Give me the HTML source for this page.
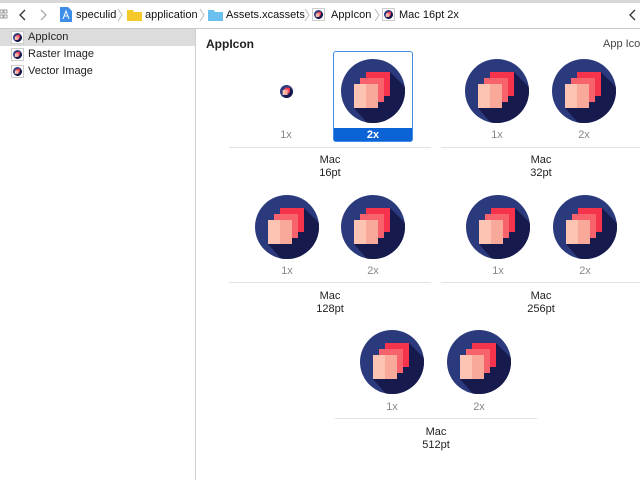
<!DOCTYPE html>
<html><head><meta charset="utf-8"><style>
*{margin:0;padding:0;box-sizing:border-box}
body{width:640px;height:480px;overflow:hidden;background:#fff;font-family:"Liberation Sans",sans-serif;font-size:11px;color:#222;position:relative}
.a{position:absolute}
.t{position:absolute;white-space:nowrap}
.b{position:absolute;white-space:nowrap;font-size:11px;top:9px;color:#111}
.c{position:absolute;text-align:center;width:80px;color:#888;font-size:11px}
.m{position:absolute;text-align:center;width:80px;color:#222;font-size:11px;line-height:13px}
.hr{position:absolute;height:1px;background:#e2e2e2}
</style></head><body>
<svg width="0" height="0" style="position:absolute">
<defs>
<clipPath id="cc"><circle cx="32" cy="32" r="32"/></clipPath>
<symbol id="ic" viewBox="0 0 64 64">
<circle cx="32" cy="32" r="32" fill="#2b3a7c"/>
<g clip-path="url(#cc)"><polygon points="49,13 75,39 75,80 40,80 13,49 37,49 37,43 43,43 43,37 49,37" fill="#161a4c"/></g>
<rect x="25" y="13" width="24" height="24" fill="#f5334c"/>
<rect x="19" y="19" width="24" height="24" fill="#f8626c"/>
<rect x="13" y="25" width="24" height="24" fill="#fdc3b3"/>
<rect x="25" y="25" width="12" height="24" fill="#f9a999"/>
</symbol>
<symbol id="sep" viewBox="0 0 6 14"><path d="M1 1 L5 7 L1 13" fill="none" stroke="#bbb" stroke-width="1"/></symbol>
</defs></svg>

<!-- toolbar -->
<div class="a" style="left:0;top:0;width:640px;height:3px;background:#d8d8d8"></div>
<div class="a" style="left:0;top:28px;width:640px;height:1px;background:#c8c8c8"></div>
<svg class="a" style="left:0;top:9px" width="8" height="12"><rect x="0" y="1" width="3" height="3" fill="none" stroke="#888" stroke-width=".8"/><rect x="4" y="1" width="3" height="3" fill="none" stroke="#888" stroke-width=".8"/><rect x="0" y="6" width="3" height="3" fill="none" stroke="#888" stroke-width=".8"/><rect x="4" y="6" width="3" height="3" fill="none" stroke="#888" stroke-width=".8"/></svg>
<svg class="a" style="left:18px;top:9px" width="10" height="12"><path d="M7 1 L2 6 L7 11" fill="none" stroke="#333" stroke-width="1.3"/></svg>
<svg class="a" style="left:38px;top:9px" width="10" height="12"><path d="M3 1 L8 6 L3 11" fill="none" stroke="#aaa" stroke-width="1.3"/></svg>
<svg class="a" style="left:60px;top:7px" width="12" height="15"><path d="M0 0 H8 L12 4 V15 H0Z" fill="#3d8ee8"/><path d="M3 12 L6 4 L9 12 M4 9 H8" stroke="#fff" fill="none" stroke-width="1"/></svg>
<div class="b" style="left:76px">speculid</div>
<svg class="a" style="left:117px;top:8px" width="6" height="14"><use href="#sep"/></svg>
<svg class="a" style="left:127px;top:9px" width="15" height="12"><path d="M0 1 H6 L7 3 H15 V12 H0Z" fill="#f6c92a"/></svg>
<div class="b" style="left:145px">application</div>
<svg class="a" style="left:199px;top:8px" width="6" height="14"><use href="#sep"/></svg>
<svg class="a" style="left:208px;top:9px" width="15" height="12"><path d="M0 1 H6 L7 3 H15 V12 H0Z" fill="#6cc0ef"/></svg>
<div class="b" style="left:226px">Assets.xcassets</div>
<svg class="a" style="left:304px;top:8px" width="6" height="14"><use href="#sep"/></svg>
<div class="a" style="left:312px;top:8px;width:13px;height:13px;border:1px solid #ccc;background:#fff"></div>
<svg class="a" style="left:314px;top:10px" width="9" height="9"><use href="#ic"/></svg>
<div class="b" style="left:331px">AppIcon</div>
<svg class="a" style="left:374px;top:8px" width="6" height="14"><use href="#sep"/></svg>
<div class="a" style="left:382px;top:8px;width:13px;height:13px;border:1px solid #ccc;background:#fff"></div>
<svg class="a" style="left:384px;top:10px" width="9" height="9"><use href="#ic"/></svg>
<div class="b" style="left:399px">Mac 16pt 2x</div>
<svg class="a" style="left:628px;top:9px" width="10" height="12"><path d="M7 1 L2 6 L7 11" fill="none" stroke="#333" stroke-width="1.3"/></svg>

<!-- sidebar -->
<div class="a" style="left:195px;top:29px;width:1px;height:451px;background:#d0d0d0"></div>
<div class="a" style="left:0;top:29px;width:195px;height:17px;background:#dcdcdc"></div>
<div class="a" style="left:11px;top:31px;width:13px;height:13px;border:1px solid #ccc;background:#fff"></div>
<svg class="a" style="left:13px;top:33px" width="9" height="9"><use href="#ic"/></svg>
<div class="t" style="left:28px;top:31px">AppIcon</div>
<div class="a" style="left:11px;top:48px;width:13px;height:13px;border:1px solid #ccc;background:#fff"></div>
<svg class="a" style="left:13px;top:50px" width="9" height="9"><use href="#ic"/></svg>
<div class="t" style="left:28px;top:48px">Raster Image</div>
<div class="a" style="left:11px;top:65px;width:13px;height:13px;border:1px solid #ccc;background:#fff"></div>
<svg class="a" style="left:13px;top:67px" width="9" height="9"><use href="#ic"/></svg>
<div class="t" style="left:28px;top:65px">Vector Image</div>

<!-- main -->
<div class="t" style="left:206px;top:37px;font-weight:bold;font-size:12px">AppIcon</div>
<div class="t" style="left:603px;top:38px;color:#444">App Icon</div>

<!-- row1 -->
<svg class="a" style="left:280px;top:85px" width="13" height="13"><use href="#ic"/></svg>
<div class="c" style="left:246px;top:129px">1x</div>
<div class="a" style="left:333px;top:51px;width:80px;height:91px;border:1px solid #3d8ee8;border-radius:3px"></div>
<div class="a" style="left:334px;top:128px;width:78px;height:13px;background:#0b63d6"></div>
<svg class="a" style="left:341px;top:59px" width="64" height="64"><use href="#ic"/></svg>
<div class="c" style="left:333px;top:129px;color:#fff;font-weight:bold">2x</div>
<div class="hr" style="left:229px;top:147px;width:202px"></div>
<div class="m" style="left:290px;top:154px">Mac<br>16pt</div>

<svg class="a" style="left:465px;top:59px" width="64" height="64"><use href="#ic"/></svg>
<svg class="a" style="left:552px;top:59px" width="64" height="64"><use href="#ic"/></svg>
<div class="c" style="left:457px;top:129px">1x</div>
<div class="c" style="left:544px;top:129px">2x</div>
<div class="hr" style="left:441px;top:147px;width:199px"></div>
<div class="m" style="left:501px;top:154px">Mac<br>32pt</div>

<!-- row2 -->
<svg class="a" style="left:255px;top:195px" width="64" height="64"><use href="#ic"/></svg>
<svg class="a" style="left:341px;top:195px" width="64" height="64"><use href="#ic"/></svg>
<div class="c" style="left:247px;top:265px">1x</div>
<div class="c" style="left:333px;top:265px">2x</div>
<div class="hr" style="left:229px;top:282px;width:202px"></div>
<div class="m" style="left:290px;top:290px">Mac<br>128pt</div>

<svg class="a" style="left:466px;top:195px" width="64" height="64"><use href="#ic"/></svg>
<svg class="a" style="left:553px;top:195px" width="64" height="64"><use href="#ic"/></svg>
<div class="c" style="left:458px;top:265px">1x</div>
<div class="c" style="left:545px;top:265px">2x</div>
<div class="hr" style="left:441px;top:282px;width:199px"></div>
<div class="m" style="left:501px;top:290px">Mac<br>256pt</div>

<!-- row3 -->
<svg class="a" style="left:360px;top:330px" width="64" height="64"><use href="#ic"/></svg>
<svg class="a" style="left:447px;top:330px" width="64" height="64"><use href="#ic"/></svg>
<div class="c" style="left:352px;top:401px">1x</div>
<div class="c" style="left:439px;top:401px">2x</div>
<div class="hr" style="left:335px;top:418px;width:202px"></div>
<div class="m" style="left:396px;top:426px">Mac<br>512pt</div>
</body></html>
